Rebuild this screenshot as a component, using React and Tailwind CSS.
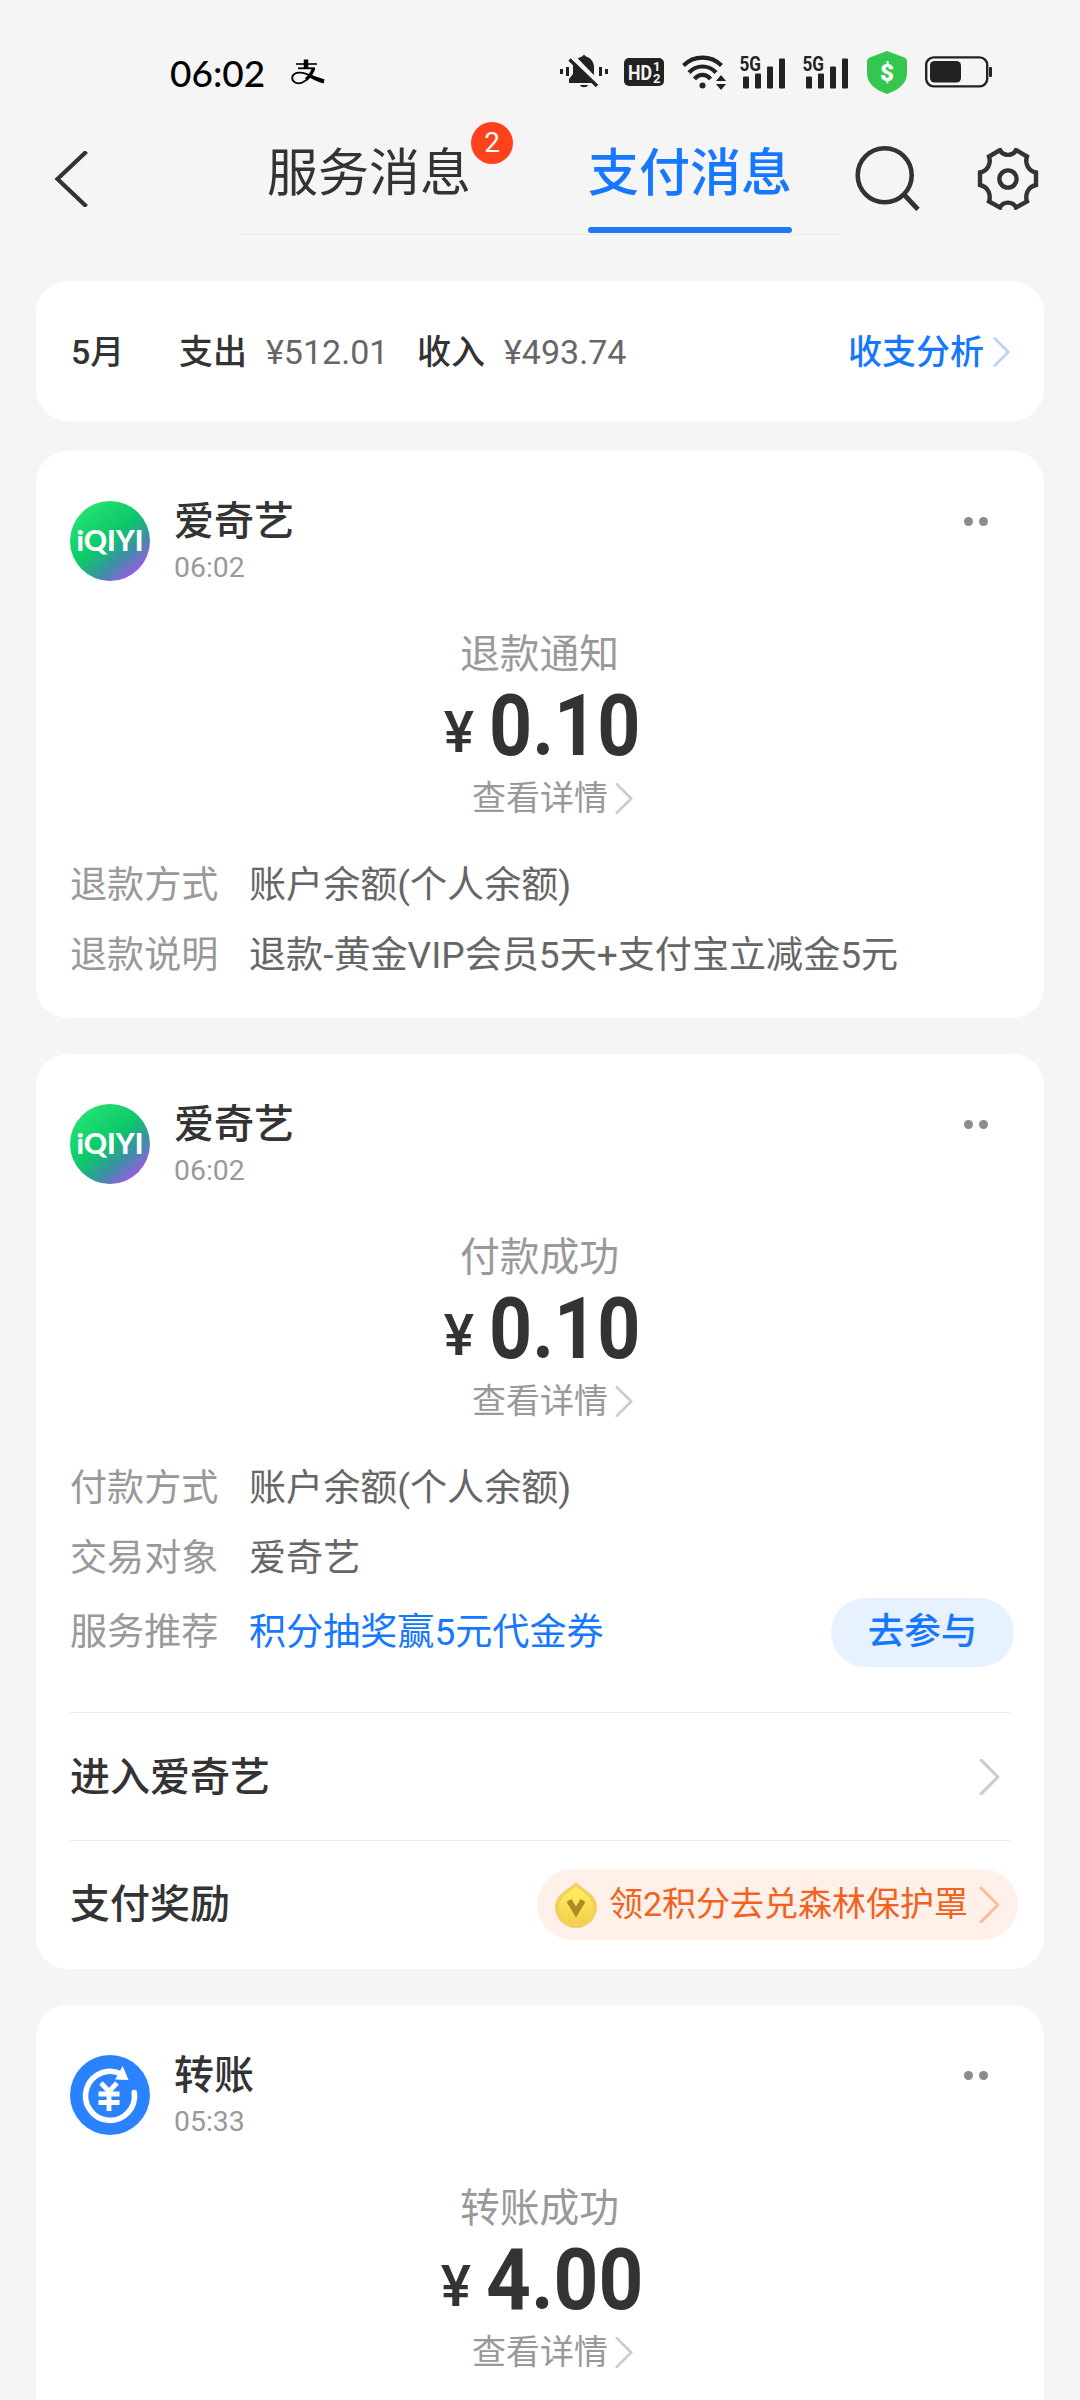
import React from 'react';

const Chevron = ({ className }) => (
    <svg viewBox="0 0 20 34" className={className} fill="none" stroke="currentColor" strokeWidth="3">
        <path d="M2 1 L18 17 L2 33" strokeLinecap="round" strokeLinejoin="round" />
    </svg>
);

const MuteIcon = () => (
    <svg width="50" height="36" viewBox="0 0 50 36" fill="#222">
        <rect x="1" y="15" width="3" height="5" />
        <rect x="7" y="13" width="3" height="9" />
        <rect x="40" y="13" width="3" height="9" />
        <rect x="46" y="15" width="3" height="5" />
        <path d="M25 0.5 L27 2.5 C32 4 35 8 35 13 V22 L39 27 V29 H10 V25 L14 20 V13 C14 8 18 4 23 2.5 Z" />
        <path d="M21 31 H29 C28 34 22 34 21 31 Z" />
        <path d="M12 2.5 L39 30.5" stroke="#f5f5f5" strokeWidth="7" />
        <path d="M10.5 5.5 L38 32" stroke="#222" strokeWidth="3.4" />
    </svg>
);

const HdIcon = () => (
    <svg width="40" height="28" viewBox="0 0 40 28" fontFamily="Roboto, sans-serif" fontWeight="700" fill="#f5f5f5">
        <rect width="40" height="28" rx="5" fill="#222" />
        <text x="4" y="21.5" fontSize="21" textLength="24" lengthAdjust="spacingAndGlyphs">HD</text>
        <text x="29" y="13" fontSize="13">1</text>
        <text x="29" y="25" fontSize="13">2</text>
    </svg>
);

const WifiIcon = () => (
    <svg width="44" height="35" viewBox="0 0 44 35" fill="none" stroke="#222" strokeWidth="4.2">
        <path d="M1.5 10.5 C12 0 29 0 39.5 10.5" />
        <path d="M7 17.5 C14.5 9.5 26.5 9.5 34 17.5" />
        <path d="M12.5 24 C17 18.5 24 18.5 28.5 24" />
        <circle cx="20.5" cy="30.5" r="3" fill="#222" stroke="none" />
        <path d="M39 20 L44 26 H34 Z M39 35 L44 29 H34 Z" fill="#222" stroke="none" />
    </svg>
);

const SignalIcon = () => (
    <svg width="47" height="35" viewBox="0 0 47 35" className="overflow-visible" fill="#222">
        <text x="0.5" y="16" fontFamily="Roboto, sans-serif" fontWeight="700" fontSize="21" textLength="21.5" lengthAdjust="spacingAndGlyphs">5G</text>
        <rect x="4" y="21.5" width="6" height="12" rx="1" />
        <rect x="16" y="18.5" width="6" height="15" rx="1" />
        <rect x="28" y="11.5" width="6" height="22" rx="1" />
        <rect x="40" y="3.5" width="6" height="30" rx="1" />
    </svg>
);

const ShieldIcon = () => (
    <svg width="40" height="43" viewBox="0 0 40 43">
        <path d="M20 0 L36 6 C39 7 40 8 40 11 V22 C40 31 34 38 20 43 C6 38 0 31 0 22 V11 C0 8 1 7 4 6 Z" fill="#34c74f" />
        <text x="20" y="29.5" textAnchor="middle" fontFamily="Roboto, sans-serif" fontWeight="900" fontSize="24" fill="#fff">$</text>
    </svg>
);

const BatteryIcon = () => (
    <svg width="67" height="32" viewBox="0 0 67 32">
        <rect x="1.2" y="1.4" width="61" height="29" rx="7.5" fill="none" stroke="#222" strokeWidth="2.4" />
        <rect x="5" y="5" width="31" height="21.5" rx="4.5" fill="#222" />
        <rect x="64" y="11" width="3" height="10" rx="1" fill="#222" />
    </svg>
);

const AlipayGlyph = () => (
    <svg width="34" height="26" viewBox="0 0 34 26" fill="none" stroke="#000">
        <path d="M15 0.5 V9" strokeWidth="4.5" />
        <path d="M5 5 H26" strokeWidth="1.6" />
        <path d="M7 9.3 H24" strokeWidth="1.8" />
        <path d="M23 9 C21 15 17 21 11 23.6 C6 25.5 1.2 23 1.2 19 C1.2 15 5 13.4 9.5 13.6 C16 14 21 18 33 21" strokeWidth="1.8" />
        <path d="M19 15.5 C23 18 28 19.5 33.5 20.5 L32.5 24.5 C26 22.5 21 20 16.5 17 Z" fill="#000" stroke="none" />
        <path d="M22.5 9.5 C21 14 18 18 15 20.5" strokeWidth="3.4" />
    </svg>
);

const StatusBar = () => (
    <div className="flex h-[120px] items-center pl-[170px] pt-[24px]">
        <span className="w-[121px] font-['Lato','Noto_Sans_CJK_SC',sans-serif] text-[37px] font-medium leading-none text-black">06:02</span>
        <AlipayGlyph />
        <div className="ml-[234px] flex items-center">
            <MuteIcon />
            <div className="ml-[15px]"><HdIcon /></div>
            <div className="ml-[18px]"><WifiIcon /></div>
            <div className="ml-[13px]"><SignalIcon /></div>
            <div className="ml-[16px]"><SignalIcon /></div>
            <div className="ml-[18px]"><ShieldIcon /></div>
            <div className="ml-[18px]"><BatteryIcon /></div>
        </div>
    </div>
);

const Header = () => (
    <div className="flex h-[161px] pl-[54px]">
        <svg width="34" height="56" viewBox="0 0 34 56" className="mt-[31px]" fill="none" stroke="#333" strokeWidth="4.2">
            <path d="M32.5 0.5 L3.5 28 L32.5 55.5" />
        </svg>
        <div className="ml-[152px] flex h-[115px] w-[600px] border-b border-[#ebebeb] pl-[27px]">
            <div className="relative mt-[27px] h-[52px] text-[51px] leading-[53px] text-[#333]">
                服务消息
                <span className="absolute left-[204px] top-[-25px] flex h-[42px] w-[42px] items-center justify-center rounded-full bg-[#ff411c] text-[28px] leading-none text-white">
                    2
                </span>
            </div>
            <div className="ml-[117px] flex flex-col">
                <div className="mt-[27px] h-[52px] text-[51px] font-medium leading-[53px] text-[#1677ff]">支付消息</div>
                <div className="mt-[28px] h-[6px] w-[204px] shrink-0 rounded-full bg-[#1f78f0]" />
            </div>
        </div>
        <svg width="66" height="66" viewBox="0 0 66 66" className="ml-[14px] mt-[25px]" fill="none" stroke="#333" strokeWidth="4.6">
            <circle cx="30.7" cy="30.3" r="27" />
            <path d="M50 49.500 L64 64.500" strokeWidth="4.8" />
        </svg>
        <svg width="62" height="62" viewBox="-1 0 62 62" className="ml-[57px] mt-[28px]" fill="none" stroke="#333" strokeWidth="4.4">
            <path d="M22 2 C25 8.500 35 8.500 38 2 L49 8.500 C46.500 15.500 50.500 23 58 24.500 V37 C50.500 38.500 46.500 46 49 53.500 L38 59.500 C35 53 25 53 22 59.500 L11 53.500 C13.500 46 9.500 38.500 2 37 V24.500 C9.500 23 13.500 15.500 11 8.500 Z" />
            <circle cx="30" cy="31" r="8.600" />
        </svg>
    </div>
);

const Summary = () => (
    <div className="flex h-[140px] items-center rounded-[32px] bg-white pl-[35px] pr-[34px] pt-[2px] text-[34px] leading-[48px]">
        <span className="w-[108px] font-medium text-[#333]">5月</span>
        <span className="font-medium text-[#333]">支出</span>
        <span className="ml-[19px] w-[134px] text-[#666]">¥512.01</span>
        <span className="ml-[17px] font-medium text-[#333]">收入</span>
        <span className="ml-[19px] text-[#666]">¥493.74</span>
        <span className="ml-auto font-medium text-[#1677ff]">收支分析</span>
        <Chevron className="ml-[9px] h-[30px] w-[17px] text-[#b9d2f8]" />
    </div>
);

const IqiyiAvatar = () => (
    <svg width="80" height="80" viewBox="0 0 80 80">
        <defs>
            <linearGradient id="iqiyi" x1="0.2" y1="0.1" x2="0.87" y2="0.9">
                <stop offset="0" stopColor="#22e070" />
                <stop offset="0.45" stopColor="#0cc76a" />
                <stop offset="0.72" stopColor="#3c8fa6" />
                <stop offset="0.95" stopColor="#925fdd" />
            </linearGradient>
        </defs>
        <circle cx="40" cy="40" r="40" fill="url(#iqiyi)" />
        <text x="6.5" y="50" fontFamily="Lato, sans-serif" fontWeight="900" fontSize="28" textLength="67" lengthAdjust="spacingAndGlyphs" fill="#fff">iQIYI</text>
    </svg>
);

const TransferAvatar = () => (
    <svg width="80" height="80" viewBox="0 0 80 80">
        <circle cx="40" cy="40" r="40" fill="#2b82ff" />
        <path d="M52 19.500 A24.500 24.500 0 1 0 64.300 37.500" fill="none" stroke="#fff" strokeWidth="5.600" strokeLinecap="round" />
        <path d="M52.700 11 L58.500 25 L45 24.500 Z" fill="#fff" />
        <path d="M31 28 L39 36.500 L47 28 M39 35 V56 M28.500 39 H49.500 M28.500 47.500 H49.500" fill="none" stroke="#fff" strokeWidth="4.800" />
    </svg>
);

const CoinIcon = () => (
    <svg width="42" height="46" viewBox="0 0 42 46">
        <defs>
            <linearGradient id="coin" x1="0" y1="0" x2="0" y2="1">
                <stop offset="0" stopColor="#fff063" />
                <stop offset="1" stopColor="#f6cf4a" />
            </linearGradient>
        </defs>
        <path d="M21 0 C24 5 42 11 42 25 A21 21 0 0 1 0 25 C0 11 18 5 21 0 Z" fill="#efd060" />
        <path d="M21 4 C25 9 38 14 38 25 A17 17 0 0 1 4 25 C4 14 17 9 21 4 Z" fill="url(#coin)" />
        <path d="M14 18.500 L21 30 L28 18.500" fill="none" stroke="#b18a28" strokeWidth="5.600" />
    </svg>
);

const MessageHead = ({ avatar, name, time, title, amount, amountWidth, amountClass }) => (
    <>
        <div className="flex h-[80px] pl-[34px]">
            {avatar}
            <div className="ml-[24px] flex flex-col">
                <span className="mt-[-3px] h-[48px] text-[40px] font-medium leading-[48px] text-[#333]">{name}</span>
                <span className="mt-[6px] text-[28.4px] leading-[32px] text-[#999]">{time}</span>
            </div>
            <div className="ml-auto mr-[56px] mt-[16px] flex gap-[6px]">
                <span className="h-[9px] w-[9px] rounded-full bg-[#8c8c8c]" />
                <span className="h-[9px] w-[9px] rounded-full bg-[#8c8c8c]" />
            </div>
        </div>
        <div className="mt-[50px] pr-[1px] text-center text-[39.8px] leading-[48px] text-[#999]">{title}</div>
        <div className="mt-[13px] flex h-[70px] items-end justify-center text-[#333]">
            <span className="mb-px mr-[15px] text-[57px] font-medium leading-[57px]">¥</span>
            <div style={{ width: amountWidth }}>
                <span className={`inline-block origin-left text-[86px] font-bold leading-[70px] ${amountClass}`}>{amount}</span>
            </div>
        </div>
        <div className="mt-[12px] flex h-[48px] items-center justify-center pl-[25px] text-[34px] text-[#999]">
            查看详情
            <Chevron className="ml-[7px] h-[31px] w-[18px] text-[#ccc]" />
        </div>
    </>
);

const Row = ({ label, children }) => (
    <div className="flex h-[70px] items-center pl-[34px] pt-[2px] text-[37.1px] leading-[48px]">
        <span className="w-[179px] text-[#999]">{label}</span>
        {children}
    </div>
);

const App = () => (
    <div className="h-[2400px] w-[1080px] overflow-hidden bg-[#f5f5f5] font-[Roboto,'Noto_Sans_CJK_SC',sans-serif]">
        <StatusBar />
        <Header />
        <div className="px-[36px]">
            <Summary />

            <div className="mt-[30px] h-[567px] rounded-[32px] bg-white pt-[50px]">
                <MessageHead
                    avatar={<IqiyiAvatar />}
                    name="爱奇艺"
                    time="06:02"
                    title="退款通知"
                    amount="0.10"
                    amountWidth={147}
                    amountClass="scale-x-[0.875]"
                />
                <div className="mt-[28px]">
                    <Row label="退款方式"><span className="text-[#666]">账户余额(个人余额)</span></Row>
                    <Row label="退款说明"><span className="text-[#666]">退款-黄金VIP会员5天+支付宝立减金5元</span></Row>
                </div>
            </div>

            <div className="mt-[36px] h-[915px] rounded-[32px] bg-white pt-[50px]">
                <MessageHead
                    avatar={<IqiyiAvatar />}
                    name="爱奇艺"
                    time="06:02"
                    title="付款成功"
                    amount="0.10"
                    amountWidth={147}
                    amountClass="scale-x-[0.875]"
                />
                <div className="mt-[28px]">
                    <Row label="付款方式"><span className="text-[#666]">账户余额(个人余额)</span></Row>
                    <Row label="交易对象"><span className="text-[#666]">爱奇艺</span></Row>
                    <div className="mt-[4px]">
                        <Row label="服务推荐">
                            <span className="text-[#1677ff]">积分抽奖赢5元代金券</span>
                            <button className="mb-[2px] ml-auto mr-[30px] h-[69px] w-[183px] rounded-full bg-[#e7f1ff] text-[36.6px] font-medium text-[#1677ff]">
                                去参与
                            </button>
                        </Row>
                    </div>
                </div>
                <div className="mx-[34px] mt-[45px] h-px bg-[#ebebeb]" />
                <div className="mx-[34px] flex h-[127px] items-center pr-[10px] text-[40px] font-medium text-[#333]">
                    <span className="pt-[2px]">进入爱奇艺</span>
                    <Chevron className="ml-auto h-[36px] w-[21px] text-[#ccc]" />
                </div>
                <div className="mx-[34px] h-px bg-[#ebebeb]" />
                <div className="ml-[34px] mr-[26px] flex h-[127px] items-center">
                    <span className="text-[40px] font-medium text-[#333]">支付奖励</span>
                    <div className="ml-auto flex h-[71px] w-[481px] items-center rounded-full bg-[#fff1ea] pl-[18px] text-[34px] text-[#f2611d]">
                        <CoinIcon />
                        <span className="ml-[12px]">领2积分去兑森林保护罩</span>
                        <Chevron className="ml-[11px] h-[36px] w-[21px] text-[#f9bfa2]" />
                    </div>
                </div>
            </div>

            <div className="mt-[36px] h-[500px] rounded-[32px] bg-white pt-[50px]">
                <MessageHead
                    avatar={<TransferAvatar />}
                    name="转账"
                    time="05:33"
                    title="转账成功"
                    amount="4.00"
                    amountWidth={153}
                    amountClass="scale-x-[0.91]"
                />
            </div>
        </div>
    </div>
);

export default App;
